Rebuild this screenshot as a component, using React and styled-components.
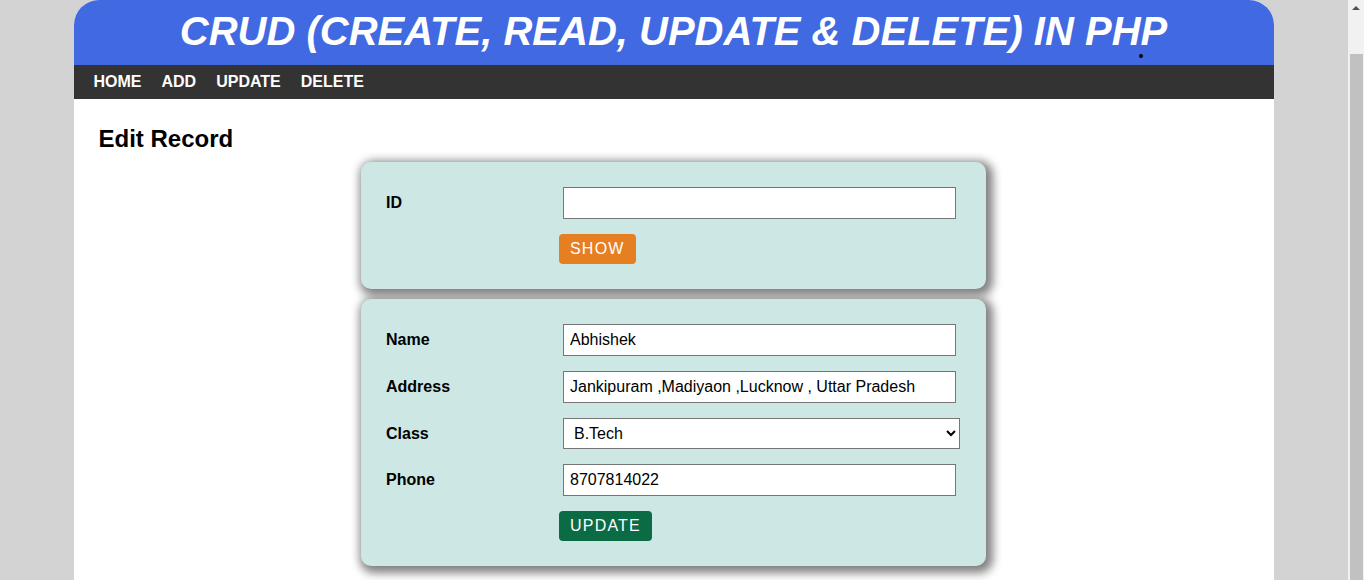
import React, { useState } from "react";
import styled, { createGlobalStyle } from "styled-components";

const GlobalStyle = createGlobalStyle`
	html, body {
		margin: 0;
		padding: 0;
		background: #d3d3d3;
		font-family: "Liberation Sans", Arial, sans-serif;
		overflow: hidden;
	}
`;

const App = () => {
	const [id, setId] = useState("");
	const [name, setName] = useState("Abhishek");
	const [address, setAddress] = useState("Jankipuram ,Madiyaon ,Lucknow , Uttar Pradesh");
	const [klass, setKlass] = useState("B.Tech");
	const [phone, setPhone] = useState("8707814022");

	return (
		<>
			<GlobalStyle />
			<Page>
				<Wrapper>
					<Header>
						<Title>CRUD (CREATE, READ, UPDATE &amp; DELETE) IN PHP</Title>
						<Dot />
					</Header>
					<Nav>
						<NavLink href="#">HOME</NavLink>
						<NavLink href="#">ADD</NavLink>
						<NavLink href="#">UPDATE</NavLink>
						<NavLink href="#">DELETE</NavLink>
					</Nav>
					<Main>
						<Heading>Edit Record</Heading>
						<Card>
							<Row>
								<Label>ID</Label>
								<Input type="text" value={id} onChange={(e) => setId(e.target.value)} />
							</Row>
							<Row>
								<span />
								<Button $color="#e67e22">SHOW</Button>
							</Row>
						</Card>
						<Card>
							<Row>
								<Label>Name</Label>
								<Input type="text" value={name} onChange={(e) => setName(e.target.value)} />
							</Row>
							<Row>
								<Label>Address</Label>
								<Input type="text" value={address} onChange={(e) => setAddress(e.target.value)} />
							</Row>
							<Row>
								<Label>Class</Label>
								<Select value={klass} onChange={(e) => setKlass(e.target.value)}>
									<option value="B.Tech">B.Tech</option>
									<option value="BCA">BCA</option>
									<option value="MCA">MCA</option>
									<option value="BSc">BSc</option>
								</Select>
							</Row>
							<Row>
								<Label>Phone</Label>
								<Input type="text" value={phone} onChange={(e) => setPhone(e.target.value)} />
							</Row>
							<Row>
								<span />
								<Button $color="#0b6b45">UPDATE</Button>
							</Row>
						</Card>
					</Main>
				</Wrapper>
				<Scrollbar>
					<Arrow />
					<Thumb />
				</Scrollbar>
			</Page>
		</>
	);
};

const Page = styled.div`
	display: flex;
	height: 580px;
	overflow: hidden;
`;

const Wrapper = styled.div`
	flex: 0 0 1200px;
	margin: 0 auto;
	background: #fff;
	border-radius: 25px 25px 0 0;
	height: 640px;
`;

const Scrollbar = styled.div`
	flex: 0 0 16px;
	margin-left: 1px;
	background: #f1f1f1;
	display: flex;
	flex-direction: column;
	align-items: center;
`;

const Arrow = styled.span`
	margin-top: 6px;
	width: 0;
	height: 0;
	border-left: 4px solid transparent;
	border-right: 4px solid transparent;
	border-bottom: 4px solid #505050;
`;

const Thumb = styled.div`
	margin-top: 44px;
	width: 13px;
	flex: 1;
	background: #c1c1c1;
`;

const Header = styled.header`
	position: relative;
	height: 65px;
	background: #4169e1;
	border-radius: 25px 25px 0 0;
	display: flex;
	align-items: center;
	justify-content: center;
`;

const Title = styled.h1`
	margin: 0;
	color: #fff;
	font-size: 40px;
	font-style: italic;
	font-weight: 700;
	line-height: 1;
	padding-bottom: 3px;
`;

const Dot = styled.span`
	position: absolute;
	left: 1065px;
	top: 54px;
	width: 4px;
	height: 4px;
	border-radius: 50%;
	background: #000;
`;

const Nav = styled.nav`
	height: 34px;
	background: #333;
	display: flex;
	align-items: center;
	gap: 20px;
	padding-left: 20px;
`;

const NavLink = styled.a`
	color: #fff;
	font-size: 16px;
	font-weight: 700;
	text-decoration: none;
`;

const Main = styled.main`
	padding: 26px 25px 20px;
	display: flex;
	flex-direction: column;
	align-items: center;
	gap: 10px;
`;

const Heading = styled.h2`
	align-self: flex-start;
	margin: 0 0 -1px;
	font-size: 24px;
	font-weight: 700;
	color: #000;
	line-height: 28px;
`;

const Card = styled.div`
	width: 625px;
	box-sizing: border-box;
	padding: 25px;
	background: #cde7e4;
	border-radius: 10px;
	box-shadow: 3px 3px 10px 4px #808080;
	display: flex;
	flex-direction: column;
	gap: 15px;
`;

const Row = styled.div`
	display: grid;
	grid-template-columns: 177px 1fr;
	align-items: center;
`;

const Label = styled.label`
	font-size: 16px;
	font-weight: 700;
	color: #000;
`;

const Input = styled.input`
	width: 393px;
	height: 32px;
	box-sizing: border-box;
	border: 1px solid #767676;
	padding: 0 6px;
	font-family: "Liberation Sans", Arial, sans-serif;
	font-size: 16px;
	color: #000;
	background: #fff;
	outline: none;
`;

const Select = styled.select`
	width: 397px;
	height: 31px;
	box-sizing: border-box;
	border: 1px solid #767676;
	border-radius: 0;
	padding: 0 6px;
	font-family: "Liberation Sans", Arial, sans-serif;
	font-size: 16px;
	color: #000;
	background: #fff;
`;

const Button = styled.button`
	justify-self: start;
	margin-left: -4px;
	height: 30px;
	padding: 0 11px;
	border: none;
	border-radius: 4px;
	background: ${(p) => p.$color};
	color: #fff;
	font-family: "Liberation Sans", Arial, sans-serif;
	font-size: 16px;
	letter-spacing: 1.2px;
	cursor: pointer;
`;

export default App;
